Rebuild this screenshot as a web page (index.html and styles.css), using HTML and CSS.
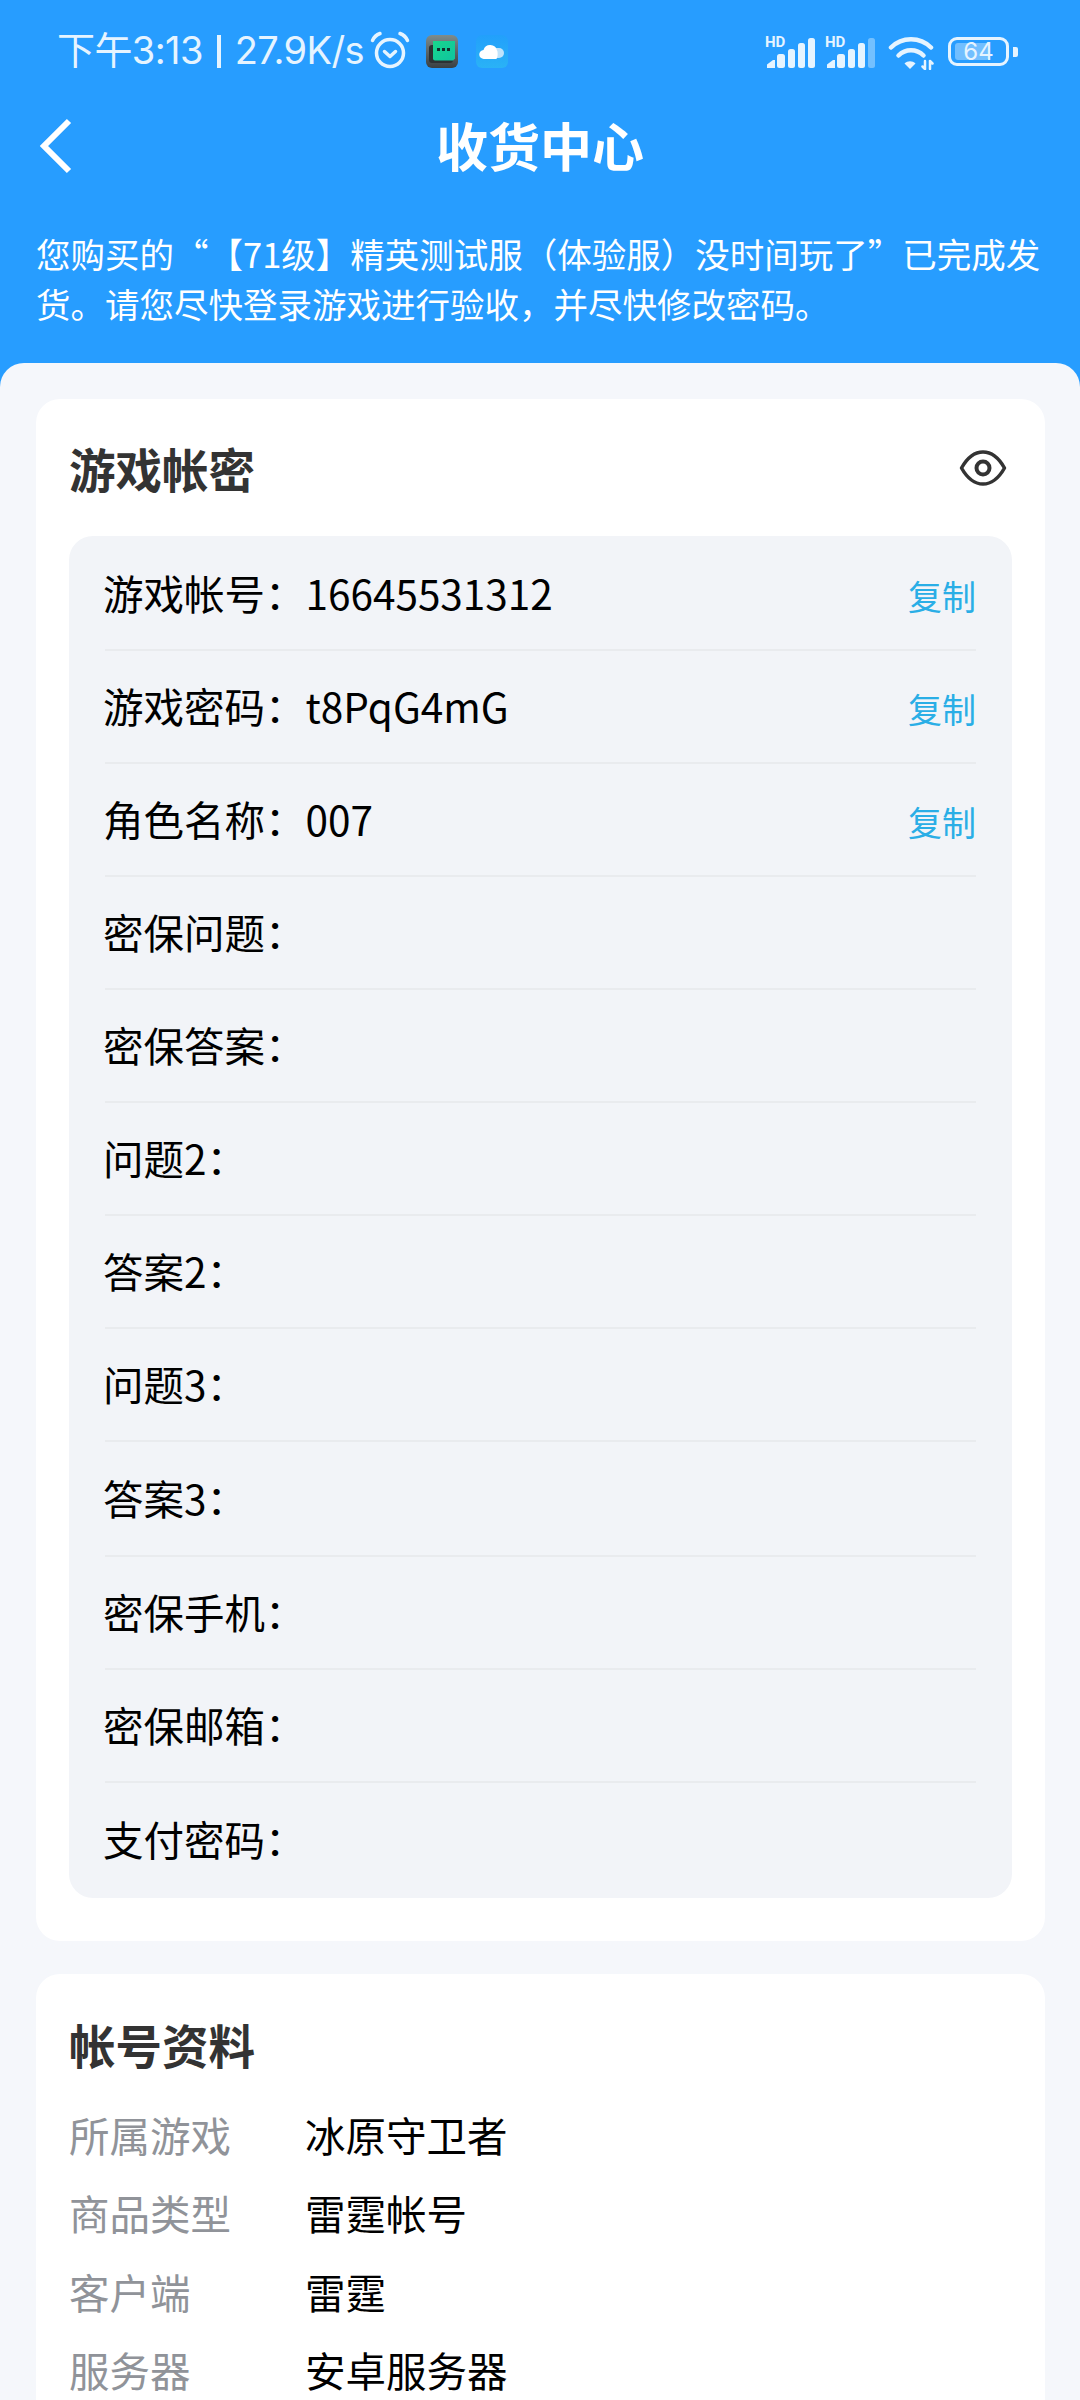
FILE: index.html
```html
<!DOCTYPE html>
<html lang="zh-CN">
<head>
  <meta charset="UTF-8">
  <meta name="viewport" content="width=device-width, initial-scale=1.0">
  <title>收货中心</title>
  <link rel="stylesheet" href="styles.css">
</head>
<body>
  <header class="top">
    <div class="status-bar">
      <div class="status-left">
        <span class="status-text">下午3:13</span>
        <span class="status-sep"></span>
        <span class="status-text">27.9K/s</span>
        <svg class="ic-alarm" viewBox="0 0 40 38" width="40" height="38" fill="none" stroke="#e6f4ff" stroke-width="3.5" stroke-linecap="round" stroke-linejoin="round">
          <circle cx="20" cy="22" r="13.500"/>
          <path d="M14.500 20.500l5.500 5 5.500-5"/>
          <path d="M2.500 9.500C4 6 6.500 3.800 10 2.500"/>
          <path d="M37.500 9.500C36 6 33.500 3.800 30 2.500"/>
        </svg>
        <svg class="ic-app" viewBox="0 0 32 33" width="32" height="33">
          <defs>
            <linearGradient id="appBody" x1="0" y1="0" x2="0" y2="1">
              <stop offset="0" stop-color="#7d8c8c"/>
              <stop offset="1" stop-color="#3a3f42"/>
            </linearGradient>
            <linearGradient id="appChat" x1="0" y1="0" x2="1" y2="1">
              <stop offset="0" stop-color="#18d68c"/>
              <stop offset="1" stop-color="#0fc4a0"/>
            </linearGradient>
          </defs>
          <rect width="32" height="33" rx="6" fill="url(#appBody)"/>
          <rect x="3" y="10" width="24" height="18" rx="3" fill="#2c3133"/>
          <path d="M7 6h22v17.500l-2 2H9a2 2 0 0 1-2-2z" fill="url(#appChat)"/>
          <rect x="11" y="13" width="3" height="3" fill="#10302c"/>
          <rect x="16" y="13" width="3" height="3" fill="#10302c"/>
          <rect x="21" y="13" width="3" height="3" fill="#10302c"/>
        </svg>
        <svg class="ic-app ic-cloud" viewBox="0 0 32 33" width="32" height="33">
          <defs>
            <linearGradient id="cloudBg" x1="0" y1="0" x2="0" y2="1">
              <stop offset="0" stop-color="#22a0fb"/>
              <stop offset="1" stop-color="#2ab2f6"/>
            </linearGradient>
          </defs>
          <rect width="32" height="33" rx="6" fill="url(#cloudBg)"/>
          <path d="M19 13h4a5 5 0 0 1 0 10h-6z" fill="#bfe3fb"/>
          <path d="M8 24a4.500 4.500 0 0 1-.5-9A7 7 0 0 1 21 15.500c1 .5 1 8.500-1 8.500z" fill="#fff"/>
        </svg>
      </div>
      <div class="status-right">
        <div class="signal">
          <span class="hd">HD</span>
          <svg viewBox="0 0 50 32" width="50" height="32" fill="#e6f4ff">
            <path d="M2 31v-3.500L8 23h2v8z"/>
            <rect x="12" y="17" width="8" height="14" rx="2.500"/>
            <rect x="23" y="12" width="7" height="19" rx="2.500"/>
            <rect x="33" y="6" width="7" height="25" rx="2.500"/>
            <rect x="43" y="1" width="7" height="30" rx="2.500"/>
          </svg>
        </div>
        <div class="signal">
          <span class="hd">HD</span>
          <svg viewBox="0 0 50 32" width="50" height="32" fill="#e6f4ff">
            <path d="M2 31v-3.500L8 23h2v8z"/>
            <rect x="12" y="17" width="8" height="14" rx="2.500"/>
            <rect x="23" y="12" width="7" height="19" rx="2.500"/>
            <rect x="33" y="6" width="7" height="25" rx="2.500"/>
            <rect x="43" y="1" width="7" height="30" rx="2.500" opacity=".4"/>
          </svg>
        </div>
        <svg class="ic-wifi" viewBox="0 0 46 34" width="46" height="34" fill="none" stroke="#e6f4ff" stroke-linecap="round">
          <path d="M3 11.500C14 .5 32 .5 43 11.500" stroke-width="4.500"/>
          <path d="M10.500 19.500c7-7 18-7 25 0" stroke-width="4.500"/>
          <path d="M22 33l-5.500-5.500c3-3 8-3 11 0z" fill="#e6f4ff" stroke="none"/>
          <path d="M37 25v8M34.500 30.500l2.500 2.500M42 33v-8M42 25l2.500 2.500" stroke-width="2.500"/>
        </svg>
        <div class="battery">
          <div class="battery-body">
            <span class="battery-fill"></span>
            <span class="battery-num">64</span>
          </div>
          <span class="battery-cap"></span>
        </div>
      </div>
    </div>
    <div class="nav">
      <svg class="back" viewBox="0 0 40 64" width="40" height="64" fill="none" stroke="#fff" stroke-width="6">
        <path d="M33 7L8 32l25 25"/>
      </svg>
      <h1>收货中心</h1>
    </div>
    <p class="notice">您购买的“【71级】精英测试服（体验服）没时间玩了”已完成发货。请您尽快登录游戏进行验收，并尽快修改密码。</p>
  </header>

  <main class="sheet">
    <section class="card card-account">
      <div class="card-head">
        <h2>游戏帐密</h2>
        <svg class="eye" viewBox="0 0 48 36" width="48" height="36" fill="none" stroke="#333" stroke-width="3.500" stroke-linejoin="round">
          <path d="M2.500 18C9 6.500 16 2 24 2s15 4.500 21.500 16C39 29.500 32 34 24 34S9 29.500 2.500 18z"/>
          <circle cx="24" cy="18" r="6.500" stroke-width="4"/>
        </svg>
      </div>
      <div class="cred-box">
        <div class="cred-row"><span class="cred-text">游戏帐号：<span class="cred-val">16645531312</span></span><a class="copy">复制</a></div>
        <div class="cred-row"><span class="cred-text">游戏密码：<span class="cred-val">t8PqG4mG</span></span><a class="copy">复制</a></div>
        <div class="cred-row"><span class="cred-text">角色名称：<span class="cred-val">007</span></span><a class="copy">复制</a></div>
        <div class="cred-row"><span class="cred-text">密保问题：</span></div>
        <div class="cred-row"><span class="cred-text">密保答案：</span></div>
        <div class="cred-row"><span class="cred-text">问题2：</span></div>
        <div class="cred-row"><span class="cred-text">答案2：</span></div>
        <div class="cred-row"><span class="cred-text">问题3：</span></div>
        <div class="cred-row"><span class="cred-text">答案3：</span></div>
        <div class="cred-row"><span class="cred-text">密保手机：</span></div>
        <div class="cred-row"><span class="cred-text">密保邮箱：</span></div>
        <div class="cred-row"><span class="cred-text">支付密码：</span></div>
      </div>
    </section>

    <section class="card card-info">
      <h2>帐号资料</h2>
      <dl class="info-list">
        <div class="info-row"><dt>所属游戏</dt><dd>冰原守卫者</dd></div>
        <div class="info-row"><dt>商品类型</dt><dd>雷霆帐号</dd></div>
        <div class="info-row"><dt>客户端</dt><dd>雷霆</dd></div>
        <div class="info-row"><dt>服务器</dt><dd>安卓服务器</dd></div>
      </dl>
    </section>
  </main>
</body>
</html>
```

FILE: styles.css
```css
:root {
  --blue: #279dff;
  --sheet: #f5f7fb;
  --box: #f2f4f8;
  --line: #e9ebee;
  --title: #333333;
  --copy: #2aaee6;
  --muted: #909399;
  --status: #e6f4ff;
}

* {
  box-sizing: border-box;
  margin: 0;
  padding: 0;
}

html, body {
  height: 2400px;
  overflow: hidden;
}

body {
  font-family: "Noto Sans CJK SC", "Noto Sans", sans-serif;
  background: var(--blue);
  color: #000;
  text-spacing-trim: space-all;
}

.top {
  height: 363px;
  color: #fff;
}

.status-bar {
  height: 100px;
  padding: 29px 62px 0 57px;
  display: flex;
  justify-content: space-between;
  align-items: flex-start;
}

.status-left {
  display: flex;
  align-items: center;
  height: 44px;
}

.status-text {
  font-family: Inter, "Noto Sans CJK SC", sans-serif;
  font-size: 38px;
  line-height: 44px;
  letter-spacing: -0.6px;
  color: var(--status);
  white-space: nowrap;
  transform: translateY(-1px);
}

.status-sep {
  width: 4px;
  height: 33px;
  margin: 1px 14px 0 14px;
  background: var(--status);
}

.ic-alarm {
  margin: -2px 0 0 6px;
}

.ic-app {
  margin-left: 16px;
}

.ic-cloud {
  margin-left: 18px;
}

.status-right {
  display: flex;
  align-items: flex-start;
  height: 34px;
  margin-top: 7px;
}

.signal {
  position: relative;
  width: 50px;
  height: 32px;
  margin-left: 10px;
  margin-top: 1px;
}

.hd {
  position: absolute;
  left: 0;
  top: -1px;
  font-family: Roboto, sans-serif;
  font-weight: 700;
  font-size: 15px;
  line-height: 13px;
  color: var(--status);
}

.ic-wifi {
  margin-left: 13px;
}

.battery {
  display: flex;
  align-items: center;
  margin: 1px 0 0 14px;
  height: 29px;
}

.battery-body {
  position: relative;
  width: 61px;
  height: 29px;
  border: 3px solid var(--status);
  border-radius: 9px;
}

.battery-fill {
  position: absolute;
  left: 4px;
  top: 3px;
  bottom: 3px;
  width: 34px;
  border-radius: 3px;
  background: rgba(255, 255, 255, 0.35);
}

.battery-num {
  position: absolute;
  inset: 0;
  text-align: center;
  font-family: Inter, sans-serif;
  font-size: 24px;
  line-height: 23px;
  color: var(--status);
}

.battery-cap {
  width: 5px;
  height: 10px;
  margin-left: 4px;
  border-radius: 0 2px 2px 0;
  background: var(--status);
}

.nav {
  height: 90px;
  position: relative;
  display: flex;
  align-items: center;
  justify-content: center;
}

.back {
  position: absolute;
  left: 36px;
  top: 14px;
}

h1 {
  font-size: 52px;
  font-weight: 700;
  line-height: 90px;
}

.notice {
  padding: 38px 36px 0;
  font-size: 34.5px;
  line-height: 50px;
}

.sheet {
  height: 2037px;
  padding: 36px 35px 0 36px;
  background: var(--sheet);
  border-radius: 24px 24px 0 0;
}

.card {
  background: #fff;
  border-radius: 24px;
}

.card-account {
  height: 1542px;
  padding: 0 33px;
}

.card-head {
  height: 137px;
  display: flex;
  justify-content: space-between;
  align-items: center;
  padding: 0 5px 0 0;
}

h2 {
  font-size: 46.5px;
  font-weight: 700;
  color: var(--title);
  line-height: 60px;
}

.cred-box {
  background: var(--box);
  border-radius: 24px;
  padding: 2px 36px 0;
  height: 1362px;
}

.cred-row {
  height: 113px;
  display: flex;
  justify-content: space-between;
  align-items: center;
  padding-bottom: 2px;
  border-bottom: 2px solid var(--line);
}

.cred-row:nth-child(9) {
  height: 115px;
}

.cred-row:last-child {
  border-bottom: none;
}

.cred-text {
  font-size: 40.5px;
  line-height: 56px;
  white-space: nowrap;
  margin-left: -2px;
}

.cred-val {
  margin-left: 0;
}

.copy {
  font-size: 34px;
  color: var(--copy);
  line-height: 50px;
  padding-top: 7px;
}

.card-info {
  margin-top: 33px;
  padding: 40px 33px 0;
  height: 500px;
}

.info-list {
  margin-top: 21px;
}

.info-row {
  height: 78.500px;
  display: flex;
  align-items: center;
  font-size: 40.5px;
}

.info-row dt {
  width: 236px;
  color: var(--muted);
}

.info-row dd {
  color: #000;
}
```
